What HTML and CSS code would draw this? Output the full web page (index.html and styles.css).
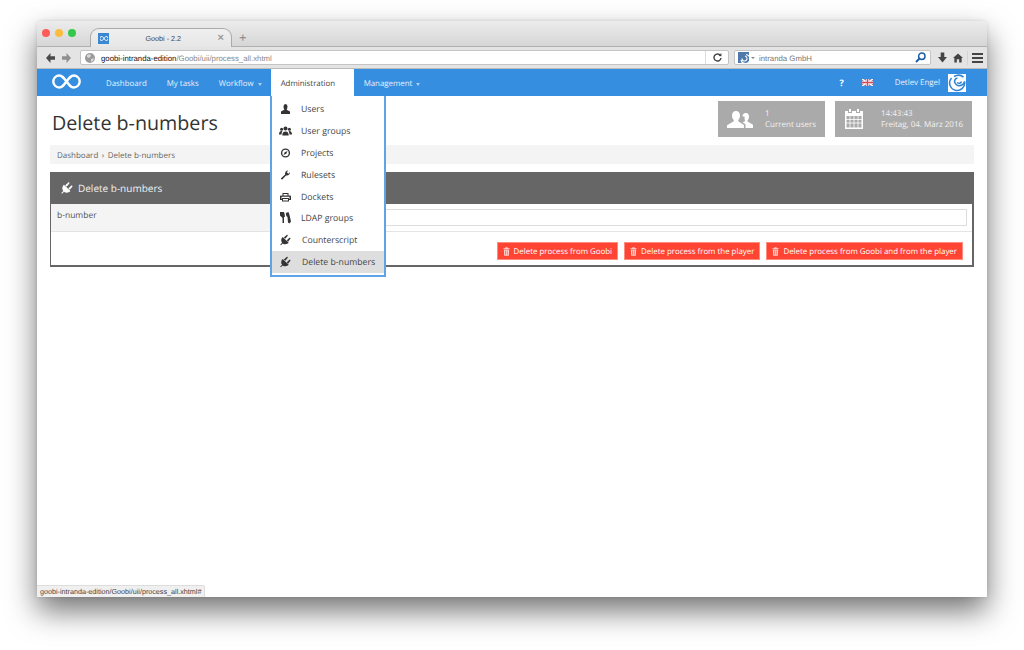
FILE: index.html
```html
<!DOCTYPE html>
<html lang="en">
<head>
<meta charset="utf-8">
<title>Goobi - 2.2</title>
<link rel="stylesheet" href="styles.css">
</head>
<body>
<svg class="defs" width="0" height="0" aria-hidden="true">
  <symbol id="plug" viewBox="0 0 12 12">
    <path d="M2.900 2.700 9.500 9.100C7.600 11 4.800 11.200 3 9.700L1 11.700.3 11 2.300 9C.8 7.200 1 4.500 2.900 2.700ZM4.200 3.200 7.300.5C7.900 0 8.900 1 8.300 1.600L5.700 4.700ZM7.400 6.400 10.300 3.600C10.900 3.100 11.900 4.100 11.300 4.700L8.800 7.800Z"/>
  </symbol>
  <symbol id="trash" viewBox="0 0 10 12">
    <path d="M3.500 0h3l.5 1.200h2.500v1.300H.5V1.200H3zM1.200 3.200h7.600L8.300 12H1.700zM3 4.500v6h.8v-6zm2.600 0v6h.8v-6z"/>
  </symbol>
</svg>
<div class="window">
  <header class="chrome">
    <div class="tabstrip">
      <div class="lights"><i class="light red"></i><i class="light amber"></i><i class="light green"></i></div>
      <div class="tab">
        <span class="favicon"><svg width="8" height="5" viewBox="0 0 16 10"><path d="M8 5C6 2 5 1 3.500 1a4 4 0 0 0 0 8C5 9 6 8 8 5c2-3 3-4 4.500-4a4 4 0 0 1 0 8C11 9 10 8 8 5Z" fill="none" stroke="#fff" stroke-width="2"/></svg></span>
        <span class="tab-title">Goobi - 2.2</span>
        <span class="tab-close">×</span>
      </div>
      <span class="tab-new">+</span>
    </div>
    <div class="toolbar">
      <svg class="tb-arrow" width="9" height="10" viewBox="0 0 9 10"><path d="M4.500 0 0 5l4.500 5V6.800H9V3.200H4.500Z" fill="#4a4a4a"/></svg>
      <svg class="tb-arrow" width="9" height="10" viewBox="0 0 9 10"><path d="M4.500 0 9 5l-4.500 5V6.800H0V3.200h4.500Z" fill="#8f8f8f"/></svg>
      <div class="urlbar">
        <svg class="globe" width="10" height="10" viewBox="0 0 10 10"><circle cx="5" cy="5" r="5" fill="#9a9a9a"/><path d="M2 2l3-1 1 2-2 2-2-1zM6 6l3-1-1 3-2 1z" fill="#d8d8d8"/></svg>
        <span class="url"><b>goobi-intranda-edition</b>/Goobi/uii/process_all.xhtml</span>
        <span class="reload">
          <svg width="9" height="9" viewBox="0 0 9 9"><path d="M7.400 2.500A3.500 3.500 0 1 0 8 5" fill="none" stroke="#444" stroke-width="1.400"/><path d="M5.500 3 8.500 3.200 8.300 0Z" fill="#444"/></svg>
        </span>
      </div>
      <div class="searchbar">
        <span class="engine"><svg width="11" height="11" viewBox="0 0 11 11"><path d="M8 2.500A4.500 4.500 0 1 1 3 8M7 4A2.500 2.500 0 1 1 4 6.500" fill="none" stroke="#fff" stroke-width="1.100"/></svg></span>
        <span class="engine-caret"></span>
        <span class="search-text">intranda GmbH</span>
        <svg class="lens" width="11" height="11" viewBox="0 0 11 11"><circle cx="6.800" cy="4.200" r="3.200" fill="none" stroke="#1f5fa8" stroke-width="1.500"/><path d="M4.500 6.500 1 10" stroke="#1f5fa8" stroke-width="2"/></svg>
      </div>
      <svg class="tb-download" width="9" height="11" viewBox="0 0 10 11"><path d="M3 0h4v5h3l-5 6-5-6h3Z" fill="#444"/></svg>
      <svg class="tb-home" width="10" height="10" viewBox="0 0 11 10"><path d="M5.500 0 11 5H9.500v5H6.800V6.500H4.200V10H1.500V5H0Z" fill="#444"/></svg>
      <span class="tb-sep"></span>
      <span class="burger"><i></i><i></i><i></i></span>
    </div>
  </header>

  <nav class="navbar">
    <svg class="logo" width="29" height="15" viewBox="0 0 29 15"><path d="M14.500 7.500C11.500 3.500 10 1.500 7.300 1.500a6 6 0 0 0 0 12c2.700 0 4.200-2 7.200-6s4.500-6 7.200-6a6 6 0 0 1 0 12c-2.700 0-4.200-2-7.200-6Z" fill="none" stroke="#fff" stroke-width="2.400"/></svg>
    <ul class="nav-items">
      <li class="nav-item">Dashboard</li>
      <li class="nav-item">My tasks</li>
      <li class="nav-item caret">Workflow</li>
      <li class="nav-item active">Administration</li>
      <li class="nav-item caret">Management</li>
    </ul>
    <div class="nav-right">
      <span class="help">?</span>
      <svg class="flag" width="11" height="7" viewBox="0 0 11 7"><rect width="11" height="7" fill="#7d7fb0"/><path d="M0 0l11 7M11 0 0 7" stroke="#fff" stroke-width="1.400"/><path d="M5.500 0v7M0 3.500h11" stroke="#fff" stroke-width="2.600"/><path d="M5.500 0v7M0 3.500h11" stroke="#d8495a" stroke-width="1.400"/></svg>
      <span class="user">Detlev Engel</span>
      <span class="avatar"><svg width="18" height="18" viewBox="0 0 18 18"><path d="M3.500 4A7.500 7.500 0 1 0 16.500 7.500C15 12.500 9 13 7 9 6 7 7 4.500 9.500 4M6 2.500C9 .8 13 .8 15.500 3.200" fill="none" stroke="#2f86d8" stroke-width="1.600"/><path d="M9 8.500c2 1.500 4 .8 4.500-1" fill="none" stroke="#2f86d8" stroke-width="1.500"/></svg></span>
    </div>
  </nav>

  <div class="menu">
    <div class="menu-row"><svg class="mi" width="11" height="10" viewBox="0 0 11 10"><path d="M3.500 2.500a2 2.500 0 0 1 4 0c0 1.500-.6 2.500-.8 3.200L10 7.500V10H1V7.500l3.300-1.800C4.100 5 3.500 4 3.500 2.500Z"/></svg><span>Users</span></div>
    <div class="menu-row"><svg class="mi wide" width="13" height="10" viewBox="0 0 13 10"><circle cx="6.500" cy="2.400" r="2"/><circle cx="2.600" cy="3.200" r="1.500"/><circle cx="10.400" cy="3.200" r="1.500"/><path d="M3.300 9.500c0-2.500 1-4 3.200-4s3.200 1.500 3.200 4ZM0 8.500c0-2 .8-3.500 2.600-3.500l.8.300C2.700 6.200 2.500 7.300 2.500 8.500ZM13 8.500c0-2-.8-3.500-2.600-3.500l-.8.300c.7.900.9 2 .9 3.200Z"/></svg><span>User groups</span></div>
    <div class="menu-row"><svg class="mi" width="11" height="10" viewBox="0 0 10 10"><circle cx="5" cy="5" r="3.900" fill="none" stroke="#333" stroke-width="1.400"/><path d="M7 3 5.800 5.800 3 7 4.200 4.200Z"/></svg><span>Projects</span></div>
    <div class="menu-row"><svg class="mi" width="11" height="10" viewBox="0 0 10 10"><path d="M1.500 9.800.3 8.600 4.600 4.400C4.100 2.400 5.500.5 7.800.5L6.300 2.200 7.800 3.700 9.500 2.300C9.500 4.500 7.600 6 5.600 5.400Z"/></svg><span class="t1">Rulesets</span></div>
    <div class="menu-row"><svg class="mi" width="11" height="10" viewBox="0 0 11 10"><path d="M2.500 1h6v2.500h1.700c.4 0 .8.400.8.800V8H9v1.500H2V8H0V4.300c0-.4.400-.8.800-.8h1.700Zm1 1v1.500h4V2Zm-2 2.700V7H2V6H9V7h.5V4.700ZM3 7v1.500h5V7Z"/></svg><span class="t1">Dockets</span></div>
    <div class="menu-row"><svg class="mi" width="11" height="12" viewBox="0 0 11 12"><path d="M0 0h4l.8 3v2H4v6H2.500V6L0 3.500ZM5.800 1 8.500 0 9.500 3 11 9.500 9.500 11.500 8 10.500 7.500 5 6.300 4Z"/></svg><span>LDAP groups</span></div>
    <div class="menu-row"><svg class="mi" width="12" height="12"><use href="#plug"/></svg><span class="t2">Counterscript</span></div>
    <div class="menu-row selected"><svg class="mi" width="12" height="12"><use href="#plug"/></svg><span class="t2">Delete b-numbers</span></div>
  </div>

  <main class="page">
    <div class="page-head">
      <h1 class="title">Delete b-numbers</h1>
      <div class="stats">
        <div class="stat stat-users">
          <svg class="stat-icon" width="26" height="17" viewBox="0 0 26 17"><path d="M5 4.500C5 2 6.500 0 9 0s4 2 4 4.500c0 2-.8 3.500-1.800 4.600v1.200L17 14v3H0v-2.800l6.800-3.900V9.100C5.800 8 5 6.500 5 4.500Z" fill="#fff"/><path d="M15.500 5.500c0-2 1.200-3.500 3.300-3.500s3.200 1.500 3.200 3.500c0 1.800-.6 3-1.500 4v1l5.500 3.300V17h-7.500v-3.800l-3-1.900c1-.5 2-.7 2.500-1.300-.4-1.300-.5-3-.5-4.500Z" fill="#fff"/></svg>
          <div class="stat-text"><span>1</span><span>Current users</span></div>
        </div>
        <div class="stat stat-date">
          <svg class="stat-icon" width="18" height="20" viewBox="0 0 18 20"><path d="M4 0h2v3H4zM12 0h2v3h-2zM0 2h3v2h4V2h4v2h4V2h3v18H0Zm1.500 5v11.500h15V7Z" fill="#fff"/><path d="M5 7v12M9 7v12M13 7v12M1 10.500h16M1 14h16" stroke="#fff" stroke-width=".8"/></svg>
          <div class="stat-text"><span>14:43:43</span><span>Freitag, 04. März 2016</span></div>
        </div>
      </div>
    </div>
    <div class="crumbs"><span>Dashboard</span><span class="crumb-sep">›</span><span>Delete b-numbers</span></div>
    <section class="box">
      <h2 class="box-head"><svg class="box-icon" width="12" height="12"><use href="#plug"/></svg>Delete b-numbers</h2>
      <div class="form-row">
        <label class="form-label">b-number</label>
        <div class="form-field"><span class="input"></span></div>
      </div>
      <div class="actions">
        <span class="btn"><svg class="btn-icon" width="7" height="9"><use href="#trash"/></svg>Delete process from Goobi</span>
        <span class="btn"><svg class="btn-icon" width="7" height="9"><use href="#trash"/></svg>Delete process from the player</span>
        <span class="btn"><svg class="btn-icon" width="7" height="9"><use href="#trash"/></svg>Delete process from Goobi and from the player</span>
      </div>
    </section>
  </main>
  <div class="status">goobi-intranda-edition/Goobi/uii/process_all.xhtml#</div>
</div>
</body>
</html>
```
FILE: styles.css
```css
* { box-sizing: border-box; }
html, body { margin: 0; height: 650px; overflow: hidden; background: #fff; }
body { padding: 21px 37px 0; font-family: "Open Sans", sans-serif; color: #444; text-rendering: geometricPrecision; }
.defs { position: absolute; }
.window {
  position: relative;
  width: 950px;
  height: 576px;
  display: flex;
  flex-direction: column;
  background: #fff;
  border-radius: 5px 5px 0 0;
  box-shadow: 0 14px 30px rgba(0,0,0,.55), 0 0 4px rgba(0,0,0,.12);
}
.chrome { height: 48px; flex: none; border-radius: 5px 5px 0 0; overflow: hidden; font-family: "Liberation Sans", sans-serif; }
.tabstrip {
  height: 26px;
  display: flex;
  align-items: flex-end;
  background: linear-gradient(#ececec, #d6d6d6);
  border-bottom: 1px solid #b0b0b0;
}
.lights { display: flex; gap: 5px; align-self: flex-start; padding: 8px 0 0 5px; }
.light { width: 8px; height: 8px; border-radius: 50%; }
.red { background: #fc5b57; }
.amber { background: #fdbc40; }
.green { background: #34c84a; }
.tab {
  width: 142px;
  height: 19px;
  margin: 0 0 -1px 14px;
  display: flex;
  align-items: center;
  padding: 0 7px 0 7px;
  background: linear-gradient(#efefef, #e6e6e6);
  border: 1px solid #aaa;
  border-bottom: 0;
  border-radius: 9px 9px 0 0;
  font-size: 7.200px;
  color: #444;
}
.favicon { width: 11px; height: 11px; background: #3a87d2; display: flex; align-items: center; justify-content: center; }
.tab-title { flex: 1; text-align: center; }
.tab-close { color: #999; font-size: 11px; font-weight: bold; }
.tab-new { color: #888; font-size: 13px; line-height: 18px; margin: 0 0 -1px 7px; }
.toolbar {
  height: 22px;
  display: flex;
  align-items: center;
  padding: 0 0 0 9px;
  background: #e4e4e4;
  border-bottom: 1px solid #bbb;
}
.tb-arrow { margin-right: 7px; }
.urlbar {
  width: 649px;
  height: 15px;
  margin-left: 2px;
  display: flex;
  align-items: center;
  padding-left: 4px;
  background: #fff;
  border: 1px solid #c4c4c4;
  border-radius: 2px;
  font-size: 7.800px;
}
.globe { flex: none; }
.url { flex: 1; margin-left: 6px; color: #888; padding-top: 1px; }
.url b { font-weight: normal; color: #111; }
.reload { width: 23px; height: 100%; display: flex; align-items: center; justify-content: center; border-left: 1px solid #ddd; }
.searchbar {
  width: 197px;
  height: 15px;
  margin-left: 5px;
  display: flex;
  align-items: center;
  padding: 0 4px 0 3px;
  background: #fff;
  border: 1px solid #c4c4c4;
  border-radius: 2px;
  font-size: 7.800px;
  color: #777;
}
.engine { width: 11px; height: 11px; background: #4d79ab; display: flex; }
.engine-caret { border: 2px solid transparent; border-top: 2.500px solid #888; margin: 2px 0 0 2px; }
.search-text { flex: 1; margin-left: 4px; padding-top: 1px; }
.tb-download { margin-left: 7px; }
.tb-home { margin-left: 6px; }
.tb-sep { width: 1px; height: 14px; background: #d0d5dc; margin-left: 4px; }
.burger { display: flex; flex-direction: column; gap: 2px; margin-left: 4px; }
.burger i { display: block; width: 11px; height: 2px; background: #444; }

.navbar {
  height: 27px;
  flex: none;
  display: flex;
  align-items: stretch;
  background: #368ee0;
  color: #fff;
  font-size: 7.900px;
}
.logo { margin: 5px 0 0 15px; }
.nav-items { display: flex; list-style: none; margin: 0 0 0 15px; padding: 0; flex: 1; }
.nav-item { display: flex; align-items: center; padding: 2px 10px 0; color: #e6f1fb; white-space: nowrap; }
.nav-item.caret::after { content: ""; border: 2.500px solid transparent; border-top: 3px solid #a9d0f3; margin: 3px 0 0 4px; }
.nav-item.caret { padding-right: 9px; }
.active { background: #fff; color: #444; height: 28px; width: 83px; padding-top: 1px; }
.nav-right { display: flex; align-items: center; padding-right: 21px; }
.help { font-weight: 700; font-size: 9px; color: #fff; }
.flag { margin-left: 18px; }
.user { margin-left: 22px; color: #e6f1fb; }
.avatar { width: 18px; height: 18px; margin-left: 8px; background: #fff; display: block; }
.avatar svg { display: block; }

.menu {
  position: absolute;
  left: 233px;
  top: 75px;
  width: 116px;
  height: 181px;
  padding: 2.600px 0 0;
  background: #fff;
  border: 2px solid #5ea4e6;
  border-top: 0;
  z-index: 5;
  font-size: 8.700px;
  color: #444;
}
.menu-row { height: 21.800px; display: flex; align-items: center; padding-left: 8px; }
.menu-row span { margin-left: 10px; }
.menu-row .t1 { margin-left: 10px; }
.menu-row .t2 { margin-left: 11px; }
.mi { fill: #333; flex: none; width: 11px; }
.mi.wide { width: 13px; margin-left: -1px; margin-right: -1px; }
.selected { background: #dedede; }

.page { padding: 5px 13px 0; }
.page-head { display: flex; justify-content: space-between; padding: 0 2px; }
.title { margin: 8px 0 0; font-size: 19.700px; font-weight: 400; line-height: 28px; color: #333; }
.stats { display: flex; gap: 10px; }
.stat { height: 36px; display: flex; align-items: center; background: #aaa; color: #f2f2f2; font-size: 8px; }
.stat-users { width: 107px; padding-left: 9px; }
.stat-date { width: 137px; padding-left: 10px; }
.stat-users .stat-text { margin-left: 12px; }
.stat-date .stat-text { margin-left: 18px; }
.stat-icon { flex: none; }
.stat-text { display: flex; flex-direction: column; line-height: 11px; }
.crumbs {
  height: 19px;
  margin: 8px 0 0;
  padding: 1px 0 0 7px;
  display: flex;
  align-items: center;
  gap: 3.500px;
  background: #f4f4f4;
  font-size: 8px;
  color: #666;
}
.box { margin: 8px 0 0; height: 95px; border: solid #666; border-width: 0 2px 2px 1px; }
.box-head {
  height: 32px;
  margin: 0 -2px 0 -1px;
  display: flex;
  align-items: center;
  padding-left: 11px;
  background: #666;
  color: #f2f2f2;
  font-size: 10px;
  font-weight: 400;
}
.box-icon { fill: #fff; margin-right: 5px; }
.form-row { height: 28px; display: flex; border-bottom: 1px solid #e4e4e4; font-size: 8.500px; }
.form-label { width: 320px; padding: 6px 0 0 6px; background: #f4f4f4; color: #555; }
.form-field { flex: 1; padding: 5px 5px 0 0; }
.input { display: block; height: 17px; border: 1px solid #ddd; }
.actions { display: flex; justify-content: flex-end; gap: 6px; padding: 10px 9px 0 0; }
.btn {
  height: 18px;
  display: flex;
  align-items: center;
  padding: 1px 5px 0;
  background: #ff4433;
  border: 1px solid #ff8a7e;
  color: #fff;
  font-size: 7.900px;
  white-space: nowrap;
}
.btn-icon { fill: #ffd0cb; margin-right: 4px; }
.status {
  position: absolute;
  left: 0;
  bottom: 0;
  height: 12px;
  padding: 0 3px;
  background: #f0f0f0;
  border: 1px solid #ddd;
  border-width: 1px 1px 0 0;
  border-radius: 0 2px 0 0;
  font-family: "Liberation Sans", sans-serif;
  font-size: 7.200px;
  line-height: 11px;
  color: #444;
}
```
